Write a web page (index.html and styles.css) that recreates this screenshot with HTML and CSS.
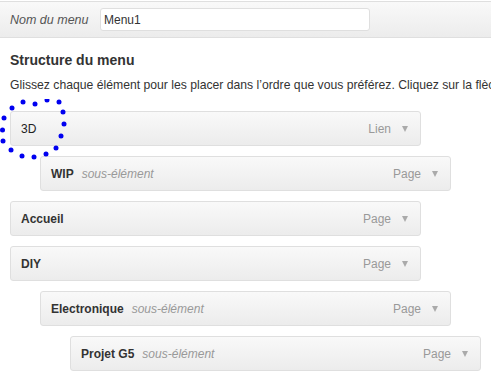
FILE: index.html
```html
<!DOCTYPE html>
<html lang="fr">
<head>
    <meta charset="UTF-8">
    <title>Menus</title>
    <link rel="stylesheet" href="styles.css">
</head>
<body>
    <div class="menu-header">
        <label class="menu-name-label" for="menuName">Nom du menu</label>
        <input type="text" id="menuName" class="menu-name" value="Menu1">
    </div>

    <div class="menu-edit">
        <h3>Structure du menu</h3>
        <p class="hint">Glissez chaque élément pour les placer dans l’ordre que vous préférez. Cliquez sur la flèche à droite de l’élément pour afficher d’autres options.</p>

        <ul class="menu-items">
            <li class="item depth-0 active"><span class="title">3D</span><span class="type">Lien</span><span class="arrow"></span></li>
            <li class="item depth-1"><span class="title">WIP</span><span class="sub">sous-élément</span><span class="type">Page</span><span class="arrow"></span></li>
            <li class="item depth-0"><span class="title">Accueil</span><span class="type">Page</span><span class="arrow"></span></li>
            <li class="item depth-0"><span class="title">DIY</span><span class="type">Page</span><span class="arrow"></span></li>
            <li class="item depth-1"><span class="title">Electronique</span><span class="sub">sous-élément</span><span class="type">Page</span><span class="arrow"></span></li>
            <li class="item depth-2"><span class="title">Projet G5</span><span class="sub">sous-élément</span><span class="type">Page</span><span class="arrow"></span></li>
        </ul>
    </div>

    <!-- hand-drawn circle around the first item -->
    <svg class="scribble" width="70" height="62" viewBox="0 99 70 62">
        <g fill="#0000f0">
            <circle cx="47" cy="100" r="2.5"/>
            <circle cx="59" cy="102" r="2.5"/>
            <circle cx="23" cy="102" r="2.5"/>
            <circle cx="35" cy="104" r="2.5"/>
            <circle cx="12" cy="108" r="2.5"/>
            <circle cx="63" cy="112" r="2.5"/>
            <circle cx="4" cy="118" r="2.5"/>
            <circle cx="64" cy="124" r="2.5"/>
            <circle cx="2.5" cy="130" r="2.5"/>
            <circle cx="61" cy="136" r="2.5"/>
            <circle cx="3" cy="141" r="2.5"/>
            <circle cx="56" cy="148" r="2.5"/>
            <circle cx="11" cy="150" r="2.5"/>
            <circle cx="46" cy="154" r="2.5"/>
            <circle cx="22" cy="156" r="2.5"/>
            <circle cx="34" cy="157" r="2.5"/>
        </g>
    </svg>
</body>
</html>
```

FILE: styles.css
```css
* { margin: 0; padding: 0; box-sizing: border-box; }
body { font-family: "Liberation Sans", Arial, sans-serif; font-size: 12px; color: #333; background: #fff;
       overflow: hidden; position: relative; }

.menu-header { margin-top: 1px; height: 37px; display: flex; align-items: center; padding: 0 10px;
               border-top: 1px solid #dfdfdf; border-bottom: 1px solid #dfdfdf;
               background: linear-gradient(to bottom, #f9f9f9, #ececec); }
.menu-name-label { font-style: italic; font-size: 12.5px; color: #555; width: 90px; }
.menu-name { width: 270px; height: 23px; border: 1px solid #dfdfdf; border-radius: 3px; padding: 0 3px;
             font: 12px "Liberation Sans", Arial, sans-serif; color: #333; background: #fff; }

.menu-edit { padding: 0 10px; }
h3 { font-size: 14px; line-height: 17px; margin-top: 14px; color: #333; }
.hint { margin-top: 8px; font-size: 12.2px; line-height: 16px; white-space: nowrap; }

.menu-items { list-style: none; margin-top: 18px; }
.item { width: 411px; height: 35px; display: flex; align-items: center; padding: 0 12px 0 10px;
        margin-bottom: 10px; line-height: 16px; border: 1px solid #dfdfdf; border-radius: 3px;
        background: linear-gradient(to bottom, #f9f9f9, #ececec); }
.depth-1 { margin-left: 30px; }
.depth-2 { margin-left: 60px; }
.title { font-weight: bold; color: #333; }
.active .title { font-weight: normal; color: #222; }
.sub { font-style: italic; color: #999; margin-left: 8px; }
.type { margin-left: auto; color: #999; }
.arrow { margin-left: 11px; width: 0; height: 0; border-left: 3.5px solid transparent;
         border-right: 3.5px solid transparent; border-top: 6px solid #aaa; }

.scribble { position: absolute; left: 0; top: 99px; }
```
